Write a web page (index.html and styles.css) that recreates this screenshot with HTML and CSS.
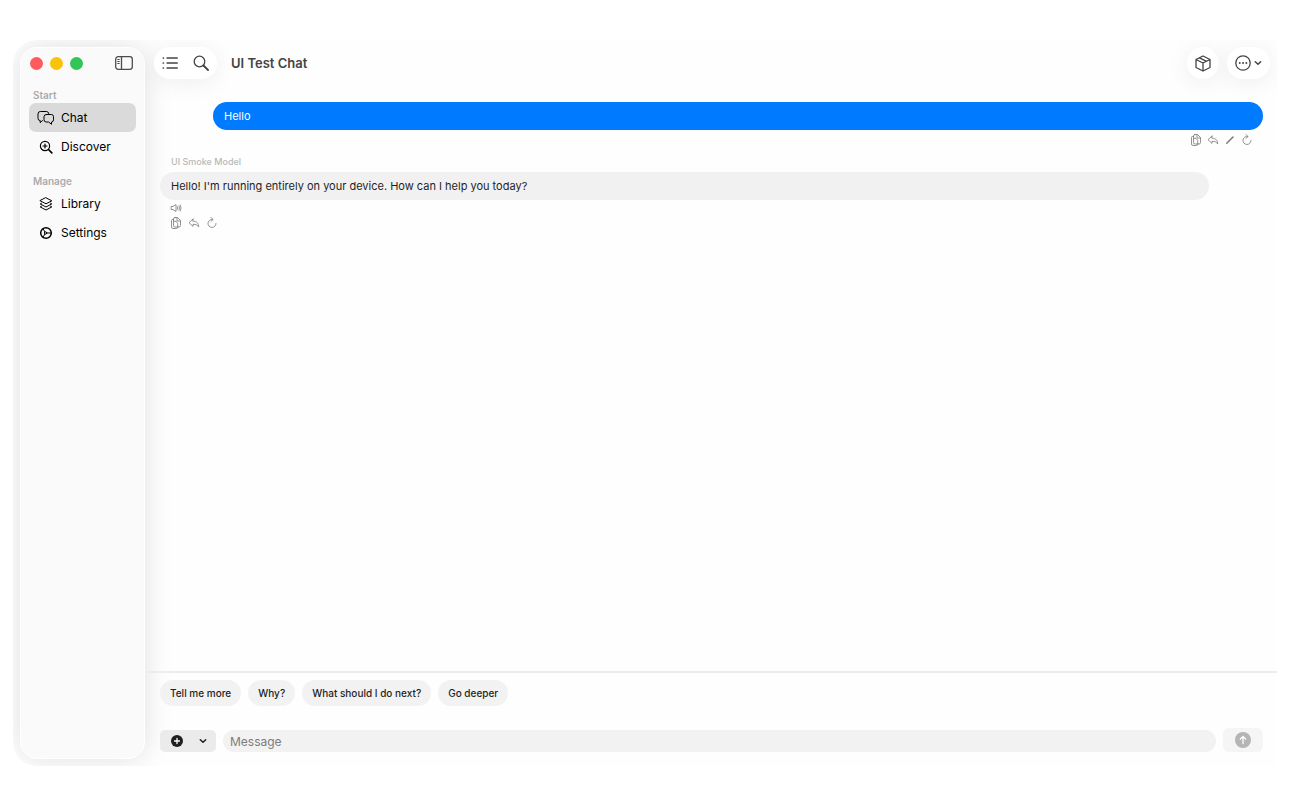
FILE: index.html
```
<!DOCTYPE html>
<html lang="en">
  <head>
    <meta charset="utf-8">
    <title>UI Test Chat</title>
    <link rel="stylesheet" href="styles.css">
  </head>
  <body>
    <!-- icons used more than once -->
    <svg class="sprite" aria-hidden="true">
      <symbol id="icon-copy" viewBox="0 0 12 14">
        <path d="M3.500 3.500H2.500Q1.500 3.500 1.500 4.500v6.500q0 1.500 1.500 1.500h3.500q1.500 0 1.500-1.500" />
        <path d="M5 1.500h2.500L10.500 4.500v5q0 1.500-1.500 1.500H5q-1.500 0-1.500-1.500V3Q3.500 1.500 5 1.500zM7 1.700v3.300h3.300M4 5.300h2L7.700 7.500v3" />
      </symbol>
      <symbol id="icon-reply" viewBox="0 0 12 14">
        <path d="M5 3L1 6.700l4 3.700V8.300c3 0 4.500.7 5.700 2.600C10.600 7.500 9 5.200 5 5.100z" />
      </symbol>
      <symbol id="icon-retry" viewBox="0 0 12 14">
        <path d="M6.500 3.500A4 4 0 1 0 10 7.500M5 1.500l2 2-2 2" />
      </symbol>
      <symbol id="icon-chevron" viewBox="0 0 8 6">
        <path d="M1.300 1.700L4 4.300l2.700-2.600" />
      </symbol>
    </svg>

    <div class="window">
      <aside class="sidebar">
        <div class="sidebar-head">
          <button class="light red" aria-label="Close"></button>
          <button class="light yellow" aria-label="Minimize"></button>
          <button class="light green" aria-label="Zoom"></button>
          <button class="toggle" aria-label="Toggle sidebar">
            <svg width="18" height="14" viewBox="0 0 18 14"><rect x=".7" y=".7" width="16.600" height="12.600" rx="2.500" stroke-width="1.300" /><path d="M6.500 1v12" stroke-width="1.300" /><path d="M2.700 3.500h1.600M2.700 5.500h1.600M2.700 7.500h1.600" /></svg>
          </button>
        </div>
        <nav>
          <h2>Start</h2>
          <a class="item active" href="#chat">
            <svg width="18" height="16" viewBox="0 0 18 16"><path d="M5.500 10.500l-2.300 2.200v-2.200H3Q1 10.500 1 8.300V4Q1 1.500 3.300 1.500h6.200q2 0 2.300 2" /><path d="M9.300 4.500h5q2.200 0 2.200 2.200v3.100q0 2.200-2 2.200v2.300L11.600 12H9.300q-2.300 0-2.300-2.200V6.700q0-2.200 2.300-2.200z" /></svg>
            Chat
          </a>
          <a class="item" href="#discover">
            <svg width="18" height="16" viewBox="0 0 18 16"><circle cx="8" cy="7" r="4.600" stroke-width="1.200" /><path d="M11.500 10.500l3.300 3.300" stroke-width="1.700" /><path d="M8 5v4M6 7h4" stroke-width="1.200" /></svg>
            Discover
          </a>
          <h2>Manage</h2>
          <a class="item" href="#library">
            <svg width="18" height="16" viewBox="0 0 18 16"><path d="M9 1.800l5.800 3L9 7.800l-5.800-3z" /><path d="M4.500 7.200l-1.300.7L9 11l5.800-3.100-1.300-.7M4.500 10.200l-1.300.7L9 14l5.800-3.100-1.300-.7" /></svg>
            Library
          </a>
          <a class="item" href="#settings">
            <svg width="18" height="16" viewBox="0 0 18 16"><circle cx="9" cy="8" r="5.300" stroke-width="1.500" /><circle cx="8.500" cy="8" r="1.200" /><path d="M9.700 8H14M7.900 7L6 3.700M7.900 9L6 12.300" /></svg>
            Settings
          </a>
        </nav>
      </aside>

      <main class="main">
        <header class="toolbar">
          <div class="pill">
            <button aria-label="Chats">
              <svg width="16" height="14" viewBox="0 0 16 14"><path d="M5 2h10.300M5 7h10.300M5 12h10.300" /><path d="M1.300 2h.1M1.300 7h.1M1.300 12h.1" stroke-width="1.700" /></svg>
            </button>
            <button aria-label="Search">
              <svg width="16" height="16" viewBox="0 0 16 16"><circle cx="6.500" cy="6.500" r="5.300" /><path d="M10.500 10.500l4.500 4.500" stroke-width="1.800" /></svg>
            </button>
          </div>
          <h1>UI Test Chat</h1>
          <div class="pill">
            <button aria-label="Model">
              <svg width="16" height="17" viewBox="0 0 16 17"><path d="M8 1l7 3.500v8L8 16l-7-3.500v-8zM1 4.500L8 8l7-3.500M8 8v8M4.500 2.800l7 3.500" /></svg>
            </button>
          </div>
          <div class="pill">
            <button class="more" aria-label="More">
              <svg width="16" height="16" viewBox="0 0 16 16"><circle cx="8" cy="8" r="7.200" /><path class="dots" d="M4.700 8h.1M8 8h.1M11.300 8h.1" /></svg>
              <svg class="chevron" width="8" height="6"><use href="#icon-chevron" /></svg>
            </button>
          </div>
        </header>

        <section class="messages">
          <article class="message user">
            <p class="bubble">Hello</p>
            <div class="actions">
              <button aria-label="Copy"><svg width="12" height="14"><use href="#icon-copy" /></svg></button>
              <button aria-label="Reply"><svg width="12" height="14"><use href="#icon-reply" /></svg></button>
              <button aria-label="Edit"><svg width="12" height="14" viewBox="0 0 12 14"><path d="M3 10L9 4" stroke-width="1.400" /><path d="M3 10l-.7.800" /></svg></button>
              <button aria-label="Retry"><svg width="12" height="14"><use href="#icon-retry" /></svg></button>
            </div>
          </article>
          <article class="message assistant">
            <h3>UI Smoke Model</h3>
            <p class="bubble">Hello! I'm running entirely on your device. How can I help you today?</p>
            <div class="actions">
              <button aria-label="Read aloud"><svg width="12" height="10" viewBox="0 0 12 10"><path d="M1.500 3.500h1.500L6 1.500v7L3 6.500H1.500zM7.500 3.700q.8 1.300 0 2.600M9 2.900q1.300 2.100 0 4.200M10.300 2q1.800 3 0 6" /></svg></button>
            </div>
            <div class="actions">
              <button aria-label="Copy"><svg width="12" height="14"><use href="#icon-copy" /></svg></button>
              <button aria-label="Reply"><svg width="12" height="14"><use href="#icon-reply" /></svg></button>
              <button aria-label="Retry"><svg width="12" height="14"><use href="#icon-retry" /></svg></button>
            </div>
          </article>
        </section>

        <footer class="footer">
          <div class="chips">
            <button>Tell me more</button>
            <button>Why?</button>
            <button>What should I do next?</button>
            <button>Go deeper</button>
          </div>
          <form class="composer">
            <button class="attach" type="button" aria-label="Attach">
              <svg width="12" height="12" viewBox="0 0 12 12"><circle class="disc" cx="6" cy="6" r="6" /><path class="mark" d="M6 3.500v5M3.500 6h5" /></svg>
              <svg class="chevron" width="8" height="6"><use href="#icon-chevron" /></svg>
            </button>
            <input type="text" placeholder="Message" aria-label="Message">
            <button class="send" type="submit" aria-label="Send">
              <svg width="16" height="16" viewBox="0 0 16 16"><circle class="disc" cx="8" cy="8" r="8" /><path class="mark" d="M8 11.500v-7M5.300 7L8 4.500 10.700 7" /></svg>
            </button>
          </form>
        </footer>
      </main>
    </div>
  </body>
</html>
```
FILE: styles.css
```
* {
  box-sizing: border-box;
}

body {
  margin: 0;
  padding: 40px 13px;
  height: 100vh;
  background: #fff;
  color: #1f1f1f;
  font-family: Inter, "Liberation Sans", sans-serif;
  font-size: 11px;
}

h1, h2, h3, p {
  margin: 0;
}

button {
  display: flex;
  align-items: center;
  justify-content: center;
  padding: 0;
  border: none;
  background: none;
  color: inherit;
  font: inherit;
}

svg {
  display: block;
  flex: none;
  fill: none;
  stroke: currentColor;
  stroke-linecap: round;
  stroke-linejoin: round;
}

.sprite {
  position: absolute;
  width: 0;
  height: 0;
}

.window {
  display: flex;
  height: 100%;
  overflow: hidden;
  border-radius: 24px 0 0 24px;
  background: #fefefe;
}

/* sidebar */
.sidebar {
  flex: none;
  width: 125px;
  margin: 7px 0 7px 7px;
  padding: 0 8px;
  border: 1px solid #fff;
  border-radius: 17px;
  background: #fafafa;
  box-shadow: 0 0 28px rgba(0, 0, 0, 0.12);
}

.sidebar-head {
  display: flex;
  align-items: center;
  gap: 7px;
  height: 30px;
  margin-bottom: 9px;
  padding: 0 3px 0 1px;
}

.light {
  width: 13px;
  height: 13px;
  border-radius: 50%;
}

.red {
  background: #ff5a5f;
}

.yellow {
  background: #f9c309;
}

.green {
  background: #32c558;
}

.toggle {
  margin-left: auto;
  color: #4c4c4c;
}

.sidebar h2 {
  padding-left: 4px;
  color: #ababab;
  font-size: 10px;
  font-weight: 600;
  line-height: 16px;
}

.item + h2 {
  margin-top: 12px;
}

.item {
  display: flex;
  align-items: center;
  gap: 6px;
  height: 29px;
  padding-left: 8px;
  border-radius: 7px;
  color: #000;
  font-size: 12px;
  text-decoration: none;
}

.active {
  background: #dadada;
}

/* toolbar */
.main {
  display: flex;
  flex: 1;
  flex-direction: column;
  min-width: 0;
}

.toolbar {
  display: flex;
  align-items: center;
  gap: 8px;
  padding: 7px 7px 0 9px;
  color: #444;
}

.toolbar h1 {
  margin-left: 6px;
  margin-right: auto;
  font-size: 13px;
  font-weight: 600;
}

.toolbar svg {
  stroke-width: 1.3px;
}

.pill {
  display: flex;
  align-items: center;
  gap: 15px;
  height: 32px;
  padding: 0 8px;
  border-radius: 16px;
  background: #fff;
  box-shadow: 0 3px 24px rgba(0, 0, 0, 0.07);
}

.more {
  gap: 3px;
}

.toolbar .dots {
  stroke-width: 1.8px;
}

.toolbar .chevron,
.attach .chevron {
  stroke-width: 1.5px;
}

/* messages */
.messages {
  flex: 1;
  padding: 23px 14px 0 15px;
}

.message {
  display: flex;
  flex-direction: column;
}

.bubble {
  padding: 0 11px;
  border-radius: 14px;
  font-size: 11px;
  line-height: 28px;
}

.user {
  align-items: flex-end;
  margin-left: 53px;
}

.user .bubble {
  width: 100%;
  background: #007aff;
  color: #fff;
}

.assistant {
  margin-top: 7px;
  margin-right: 54px;
}

.assistant .bubble {
  background: #f1f1f1;
}

.message h3 {
  margin-bottom: 2px;
  padding-left: 11px;
  color: #b8b8b8;
  font-size: 9px;
  font-weight: 500;
  line-height: 16px;
}

.actions {
  display: flex;
  gap: 6px;
  padding: 3px 10px 0;
  color: #777;
}

.user .actions {
  gap: 5px;
}

.actions svg {
  stroke-width: 0.8px;
}

/* footer */
.footer {
  padding: 7px 14px 14px 15px;
  border-top: 2px solid #ececec;
}

.chips {
  display: flex;
  gap: 7px;
}

.chips button {
  height: 26px;
  padding: 0 10px;
  border-radius: 13px;
  background: #f2f2f2;
  font-size: 10px;
  font-weight: 500;
}

.composer {
  display: flex;
  align-items: flex-end;
  gap: 7px;
  margin-top: 22px;
}

.attach {
  gap: 16px;
  width: 56px;
  height: 22px;
  padding-left: 2px;
  border-radius: 5px;
  background: #ebebeb;
}

.composer input {
  flex: 1;
  min-width: 0;
  height: 22px;
  padding: 0 7px;
  border: none;
  border-radius: 11px;
  outline: none;
  background: #f2f2f2;
  font: inherit;
  font-size: 12px;
}

.composer input::placeholder {
  color: #7c7c7c;
}

.send {
  width: 40px;
  height: 24px;
  border-radius: 6px;
  background: #f5f5f5;
  color: #b5b5b5;
}

.disc {
  fill: currentColor;
  stroke: none;
}

.mark {
  stroke: #fff;
  stroke-width: 1.3px;
}
```
